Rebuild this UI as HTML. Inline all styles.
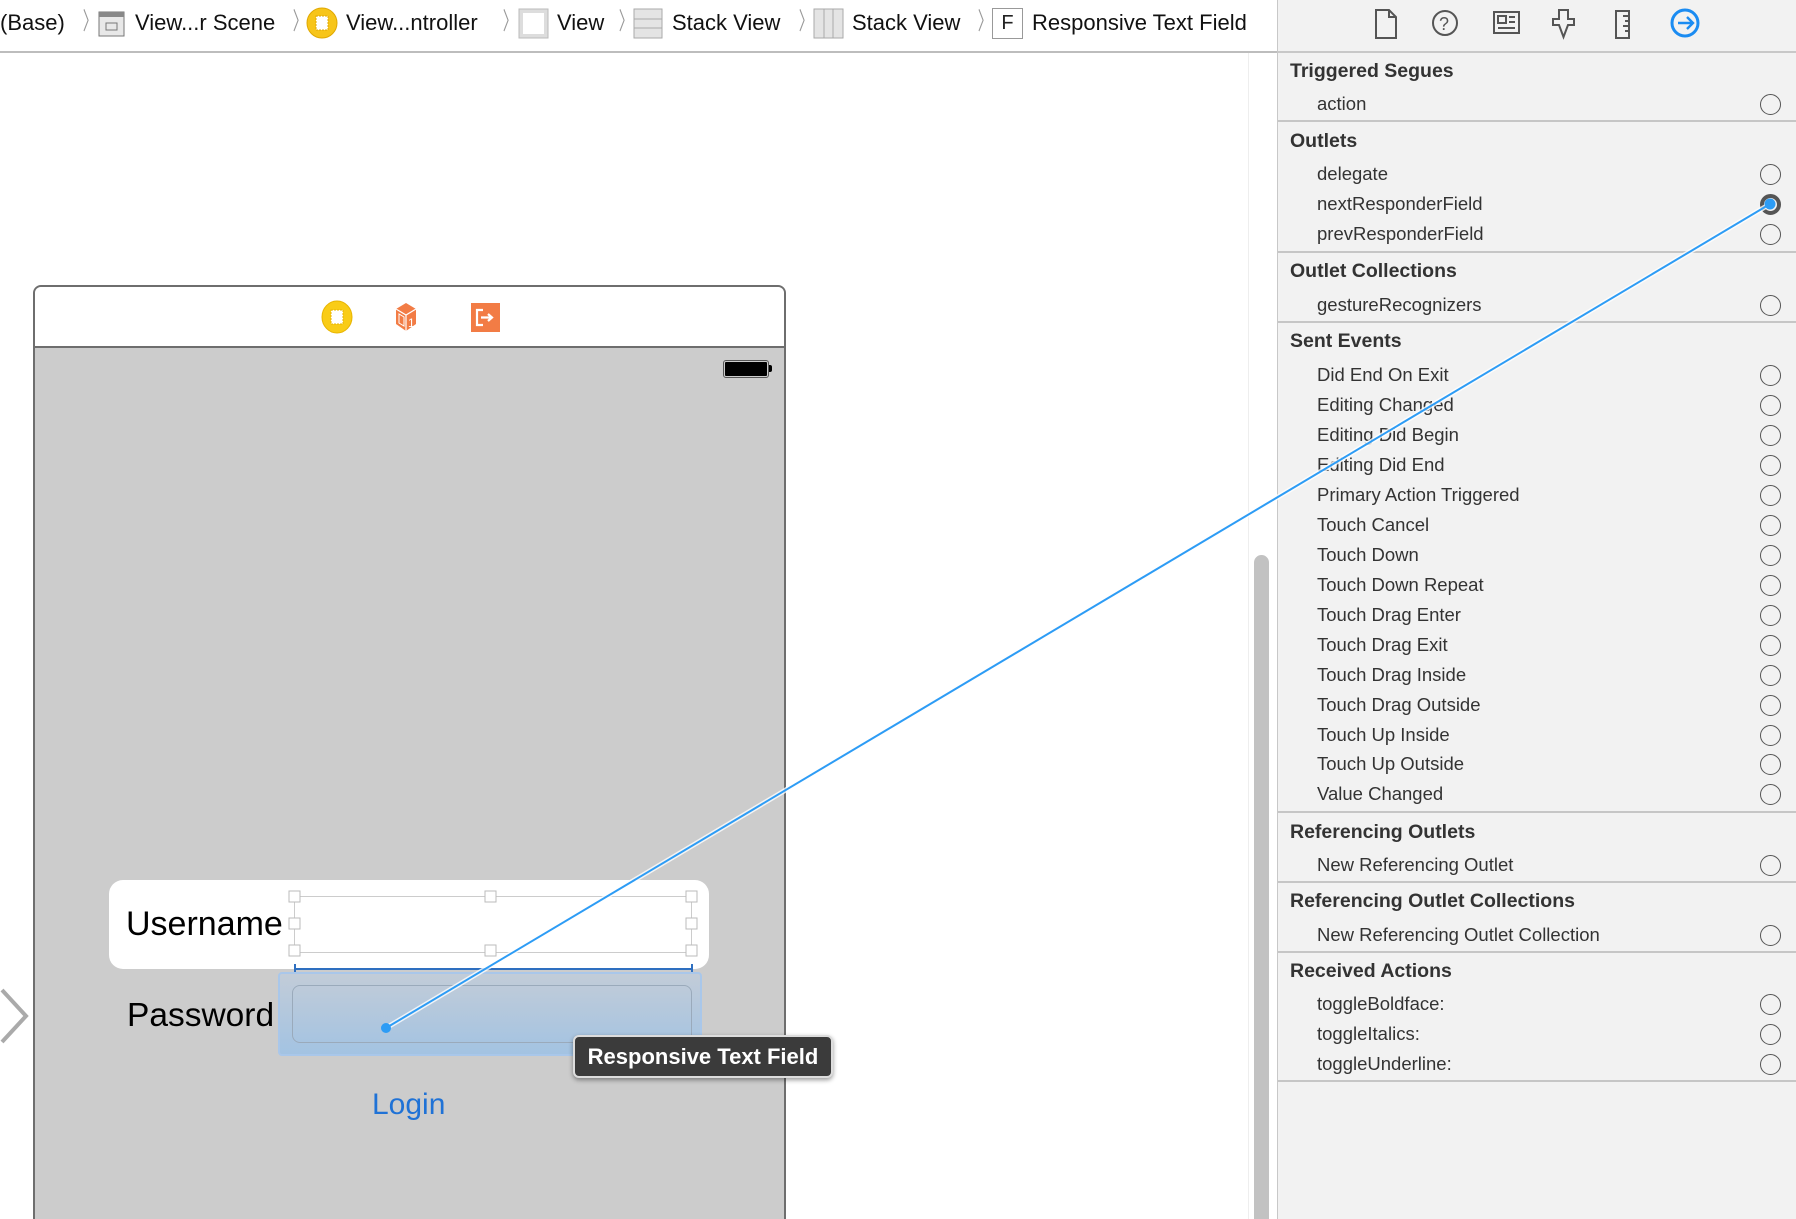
<!DOCTYPE html>
<html><head><meta charset="utf-8"><style>
*{margin:0;padding:0;box-sizing:border-box}
html,body{width:1796px;height:1219px;overflow:hidden}
body{background:#fff;font-family:"Liberation Sans",sans-serif;color:#222}
#wrap{position:relative;width:1796px;height:1219px;overflow:hidden}
.a{position:absolute}
.bc{top:9px;font-size:22px;color:#111;white-space:nowrap;line-height:28px}
.chev{top:8px;color:#999;font-size:24px;line-height:28px;transform:scaleX(.6)}
#panel{left:1277px;top:0;width:519px;height:1219px;background:#f2f2f2;border-left:1px solid #c8c8c8}
.h{left:1290px;font-weight:bold;font-size:19.5px;color:#333;line-height:24px}
.r{left:1317px;font-size:18.5px;color:#333;line-height:24px}
.c{left:1760px;width:21px;height:21px;border:1.6px solid #555;border-radius:50%}
.s{left:1278px;width:518px;height:2px;background:#c6c6c6}
</style></head><body><div id="wrap">
<!-- breadcrumb -->
<div class="a bc" style="left:0">(Base)</div>
<div class="a chev" style="left:78px">〉</div>
<svg class="a" style="left:98px;top:9px" width="27" height="28"><rect x="1" y="3" width="25" height="24" fill="#e8e8e8" stroke="#777"/><rect x="1" y="3" width="25" height="5" fill="#888"/><rect x="8" y="14" width="11" height="7" fill="none" stroke="#777"/></svg>
<div class="a bc" style="left:135px">View...r Scene</div>
<div class="a chev" style="left:288px">〉</div>
<svg class="a" style="left:306px;top:7px" width="32" height="32"><circle cx="16" cy="16" r="15" fill="#f7c51a" stroke="#e0a800"/><rect x="10" y="9" width="12" height="14" fill="#fff" stroke="#e0a800" stroke-dasharray="2 1"/></svg>
<div class="a bc" style="left:346px">View...ntroller</div>
<div class="a chev" style="left:498px">〉</div>
<svg class="a" style="left:518px;top:8px" width="31" height="31"><rect x="1" y="1" width="29" height="29" fill="#ddd" stroke="#bbb"/><rect x="5" y="5" width="21" height="21" fill="#fff"/></svg>
<div class="a bc" style="left:557px">View</div>
<div class="a chev" style="left:614px">〉</div>
<svg class="a" style="left:633px;top:8px" width="30" height="31"><rect x="1" y="1" width="28" height="29" fill="#e4e4e4" stroke="#aaa"/><path d="M1 11H29M1 20H29" stroke="#aaa"/></svg>
<div class="a bc" style="left:672px">Stack View</div>
<div class="a chev" style="left:794px">〉</div>
<svg class="a" style="left:813px;top:8px" width="31" height="31"><rect x="1" y="1" width="29" height="29" fill="#e4e4e4" stroke="#aaa"/><path d="M11 1V30M20 1V30" stroke="#aaa"/></svg>
<div class="a bc" style="left:852px">Stack View</div>
<div class="a chev" style="left:973px">〉</div>
<div class="a" style="left:992px;top:8px;width:31px;height:31px;border:1px solid #999;font-size:20px;text-align:center;line-height:29px">F</div>
<div class="a bc" style="left:1032px">Responsive Text Field</div>
<div class="a" style="left:0;top:51px;width:1277px;height:2px;background:#bdbdbd"></div>
<!-- scrollbar -->
<div class="a" style="left:1254px;top:555px;width:15px;height:700px;border-radius:8px;background:#c2c2c2"></div>
<div class="a" style="left:1248px;top:53px;width:1px;height:1166px;background:#eee"></div>
<!-- device -->
<div class="a" style="left:33px;top:285px;width:753px;height:980px;border:2px solid #6e6e6e;border-radius:8px;background:#ccc;overflow:hidden">
 <div style="height:61px;background:#fff;border-bottom:2px solid #6e6e6e"></div>
</div>
<svg class="a" style="left:320px;top:300px" width="180" height="34">
<ellipse cx="17" cy="17" rx="15" ry="16" fill="#f9cc17" stroke="#e8b400"/><rect x="11" y="10" width="12" height="14" fill="#fff" stroke="#e8b400" stroke-dasharray="2 1"/>
<path d="M76 9 L86 3 L96 9 L96 24 L86 31 L76 24Z" fill="#f27c45"/><path d="M76 9 L86 15 L96 9 M86 15 V31" stroke="#fff" stroke-width="1.2" fill="none"/><path d="M79 14v9l5 3v-9z" fill="none" stroke="#fff"/><text x="88" y="27" fill="#fff" font-size="12" font-family="Liberation Sans">1</text>
<rect x="151" y="3" width="29" height="29" fill="#f27c45"/><path d="M163 10h-6v15h6M161 17.5h10M168 14l4 3.5-4 3.5" stroke="#fff" stroke-width="2.2" fill="none"/>
</svg>
<div class="a" style="left:723px;top:360px;width:46px;height:18px;border:1.5px solid #555;border-radius:3px;padding:1px"><div style="background:#000;width:100%;height:100%;border-radius:1px"></div></div>
<div class="a" style="left:769px;top:365px;width:3px;height:7px;background:#000;border-radius:0 2px 2px 0"></div>
<!-- form -->
<div class="a" style="left:109px;top:880px;width:600px;height:89px;background:#fff;border-radius:14px"></div>
<div class="a" style="left:126px;top:903px;font-size:34px;color:#000;line-height:42px">Username</div>
<div class="a" style="left:294px;top:896px;width:398px;height:57px;border:1px solid #ccc"></div>
<svg class="a" style="left:286px;top:888px" width="415" height="85" fill="#fff" stroke="#bbb">
<rect x="3" y="3" width="11" height="11"/><rect x="199" y="3" width="11" height="11"/><rect x="400" y="3" width="11" height="11"/>
<rect x="3" y="30" width="11" height="11"/><rect x="400" y="30" width="11" height="11"/>
<rect x="3" y="57" width="11" height="11"/><rect x="199" y="57" width="11" height="11"/><rect x="400" y="57" width="11" height="11"/>
<path d="M9 81H406M9 76v8M406 76v8" stroke="#2e6fc0" stroke-width="2"/></svg>
<div class="a" style="left:278px;top:972px;width:424px;height:84px;border:2px solid #a9c7ea;border-radius:4px;background:linear-gradient(#c2ccd8,#a3c3e2)"></div>
<div class="a" style="left:292px;top:985px;width:400px;height:58px;border:1px solid #9aaabb;border-radius:8px"></div>
<div class="a" style="left:127px;top:995px;font-size:33.5px;color:#000;line-height:42px">Password</div>
<div class="a" style="left:372px;top:1087px;font-size:30px;color:#1f72d6;line-height:36px">Login</div>
<svg class="a" style="left:0;top:988px" width="30" height="56"><path d="M2 2L26 28L2 54" fill="none" stroke="#aaa" stroke-width="4"/></svg>
<!-- panel -->
<div id="panel" class="a"></div>
<div class="a" style="left:1278px;top:51px;width:518px;height:2px;background:#c8c8c8"></div>
<svg class="a" style="left:1370px;top:6px" width="340" height="36" fill="none" stroke="#555" stroke-width="2">
<path d="M6 4h13l7 7v21H6z M19 4v7h7"/>
<circle cx="75" cy="17" r="12"/><text x="69" y="24" font-size="18" fill="#555" stroke="none" font-family="Liberation Sans">?</text>
<rect x="124" y="6" width="25" height="21"/><rect x="128" y="10" width="8" height="7"/><path d="M139 11h6M139 16h6M128 22h17"/>
<path d="M189 4h9v9h6v6h-6l-4.5 12l-4.5-12h-6v-6h6z"/>
<rect x="246" y="5" width="13" height="27"/><path d="M253 10h6M255 15h4M253 20h6M255 25h4"/>
<circle cx="315" cy="17" r="13" stroke="#1b8cf2" stroke-width="3"/><path d="M308 17h14M317 11l6 6-6 6" stroke="#1b8cf2" stroke-width="2.4"/>
</svg>
<div class="a h" style="top:59px">Triggered Segues</div>
<div class="a r" style="top:92px">action</div><div class="a c" style="top:94px"></div>
<div class="a s" style="top:120px"></div>
<div class="a h" style="top:129px">Outlets</div>
<div class="a r" style="top:162px">delegate</div><div class="a c" style="top:164px"></div>
<div class="a r" style="top:192px">nextResponderField</div><div class="a c" style="top:194px;border:4px solid #555"></div>
<div class="a r" style="top:222px">prevResponderField</div><div class="a c" style="top:224px"></div>
<div class="a s" style="top:251px"></div>
<div class="a h" style="top:259px">Outlet Collections</div>
<div class="a r" style="top:293px">gestureRecognizers</div><div class="a c" style="top:295px"></div>
<div class="a s" style="top:321px"></div>
<div class="a h" style="top:329px">Sent Events</div>
<div class="a r" style="top:363px">Did End On Exit</div><div class="a c" style="top:365px"></div>
<div class="a r" style="top:393px">Editing Changed</div><div class="a c" style="top:395px"></div>
<div class="a r" style="top:423px">Editing Did Begin</div><div class="a c" style="top:425px"></div>
<div class="a r" style="top:453px">Editing Did End</div><div class="a c" style="top:455px"></div>
<div class="a r" style="top:483px">Primary Action Triggered</div><div class="a c" style="top:485px"></div>
<div class="a r" style="top:513px">Touch Cancel</div><div class="a c" style="top:515px"></div>
<div class="a r" style="top:543px">Touch Down</div><div class="a c" style="top:545px"></div>
<div class="a r" style="top:573px">Touch Down Repeat</div><div class="a c" style="top:575px"></div>
<div class="a r" style="top:603px">Touch Drag Enter</div><div class="a c" style="top:605px"></div>
<div class="a r" style="top:633px">Touch Drag Exit</div><div class="a c" style="top:635px"></div>
<div class="a r" style="top:663px">Touch Drag Inside</div><div class="a c" style="top:665px"></div>
<div class="a r" style="top:693px">Touch Drag Outside</div><div class="a c" style="top:695px"></div>
<div class="a r" style="top:723px">Touch Up Inside</div><div class="a c" style="top:725px"></div>
<div class="a r" style="top:752px">Touch Up Outside</div><div class="a c" style="top:754px"></div>
<div class="a r" style="top:782px">Value Changed</div><div class="a c" style="top:784px"></div>
<div class="a s" style="top:811px"></div>
<div class="a h" style="top:820px">Referencing Outlets</div>
<div class="a r" style="top:853px">New Referencing Outlet</div><div class="a c" style="top:855px"></div>
<div class="a s" style="top:881px"></div>
<div class="a h" style="top:889px">Referencing Outlet Collections</div>
<div class="a r" style="top:923px">New Referencing Outlet Collection</div><div class="a c" style="top:925px"></div>
<div class="a s" style="top:951px"></div>
<div class="a h" style="top:959px">Received Actions</div>
<div class="a r" style="top:992px">toggleBoldface:</div><div class="a c" style="top:994px"></div>
<div class="a r" style="top:1022px">toggleItalics:</div><div class="a c" style="top:1024px"></div>
<div class="a r" style="top:1052px">toggleUnderline:</div><div class="a c" style="top:1054px"></div>
<div class="a s" style="top:1080px"></div>
<!-- connection line -->
<svg class="a" style="left:0;top:0" width="1796" height="1219">
<line x1="386" y1="1028" x2="1770" y2="204" stroke="#fff" stroke-width="5" opacity=".8"/>
<line x1="386" y1="1028" x2="1770" y2="204" stroke="#2d9cf5" stroke-width="2"/>
<circle cx="386" cy="1028" r="5" fill="#2d9cf5"/><circle cx="1770" cy="204" r="5.5" fill="#2d9cf5"/>
</svg>
<div class="a" style="left:573px;top:1035px;width:260px;height:43px;background:#3b3b3b;border:2px solid #ddd;border-radius:6px;box-shadow:0 2px 5px rgba(0,0,0,.4);color:#fff;font-weight:bold;font-size:22px;line-height:39px;text-align:center">Responsive Text Field</div>
</div></body></html>
